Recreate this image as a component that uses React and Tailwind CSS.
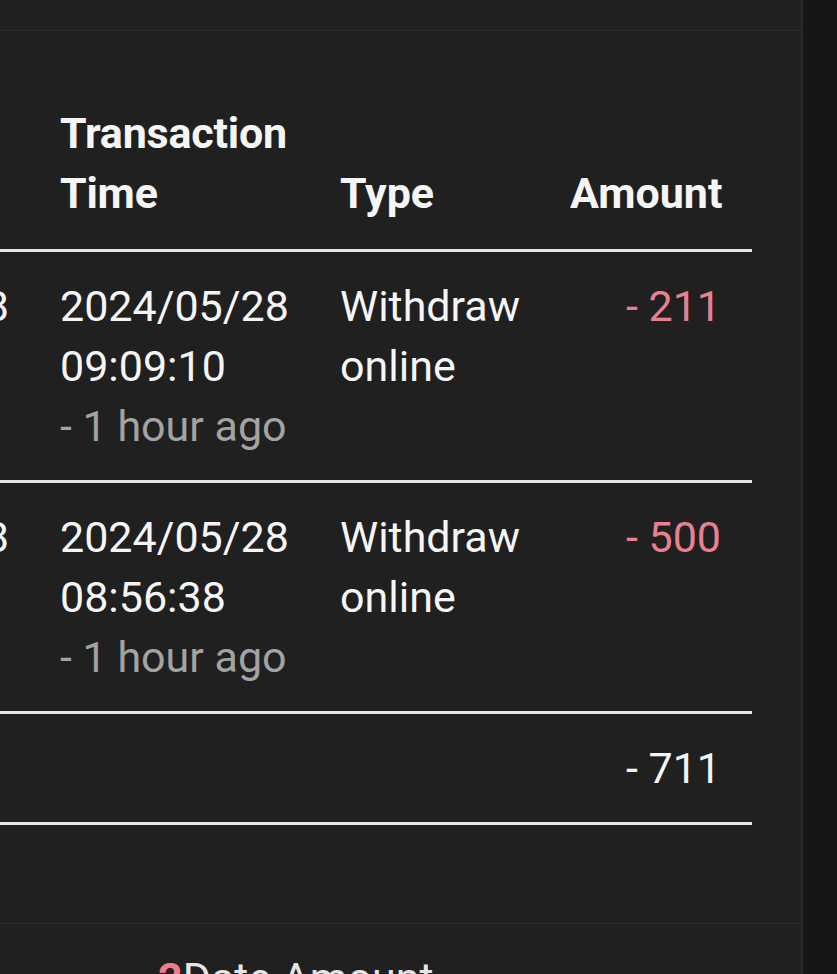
import React from 'react';

const rows = [
  { ref: '2024/05/28', date: '2024/05/28', time: '09:09:10', ago: '- 1 hour ago', type: ['Withdraw', 'online'], amount: '- 211' },
  { ref: '2024/05/28', date: '2024/05/28', time: '08:56:38', ago: '- 1 hour ago', type: ['Withdraw', 'online'], amount: '- 500' },
];

const App = () => {
  return (
    <div
      className="flex h-[974px] w-full overflow-hidden bg-[#161616] text-[43px] leading-[60px] text-[#f5f5f5]"
      style={{ fontFamily: 'Roboto, "Liberation Sans", sans-serif' }}
    >
      <div className="flex w-[803px] shrink-0 flex-col border-r-2 border-[#2a2a2a] bg-[#202020]">
        <div className="h-[31px] shrink-0 border-b border-[#2b2b2b] bg-[#212121]" />

        <div className="h-[892px] shrink-0 overflow-hidden pt-[48px]">
          <table className="ml-[-264px] w-[1016px] table-fixed border-collapse">
            <colgroup>
              <col className="w-[300px]" />
              <col className="w-[280px]" />
              <col className="w-[230px]" />
              <col />
            </colgroup>
            <thead>
              <tr className="border-b-[3px] border-[#e6e6e6]">
                <th className="px-[24px] pb-[26px] pt-[24px] text-left align-bottom font-bold">Date</th>
                <th className="px-[24px] pb-[26px] pt-[24px] text-left align-bottom font-bold tracking-[-0.2px]">
                  Transaction
                  <br />
                  Time
                </th>
                <th className="px-[24px] pb-[26px] pt-[24px] text-left align-bottom font-bold">Type</th>
                <th className="pb-[26px] pl-[24px] pr-[30px] pt-[24px] text-right align-bottom font-bold">Amount</th>
              </tr>
            </thead>
            <tbody>
              {rows.map((r, i) => (
                <tr key={i} className="border-b-[3px] border-[#e6e6e6]">
                  <td className="py-[24px] pl-[24px] pr-[27px] text-right align-top">{r.ref}</td>
                  <td className="px-[24px] py-[24px] align-top">
                    <div>{r.date}</div>
                    <div>{r.time}</div>
                    <div className="text-[#a3a3a3]">{r.ago}</div>
                  </td>
                  <td className="px-[24px] py-[24px] align-top">
                    <div>{r.type[0]}</div>
                    <div>{r.type[1]}</div>
                  </td>
                  <td className="py-[24px] pl-[24px] pr-[31px] text-right align-top text-[#e8808f]">{r.amount}</td>
                </tr>
              ))}
              <tr className="border-b-[3px] border-[#e6e6e6]">
                <td className="px-[24px] py-[24px]" />
                <td className="px-[24px] py-[24px]" />
                <td className="px-[24px] py-[24px]" />
                <td className="py-[24px] pl-[24px] pr-[31px] text-right">- 711</td>
              </tr>
            </tbody>
          </table>
        </div>

        <div className="flex-1 border-t border-[#2b2b2b] bg-[#202020] pl-[158px] pt-[24px]">
          <span className="font-bold text-[#f07a90]">2</span>
          <span className="text-[#e5e5e5]">Date Amount</span>
        </div>
      </div>
      <div className="flex-1 bg-[#161616]" />
    </div>
  );
};

export default App;
